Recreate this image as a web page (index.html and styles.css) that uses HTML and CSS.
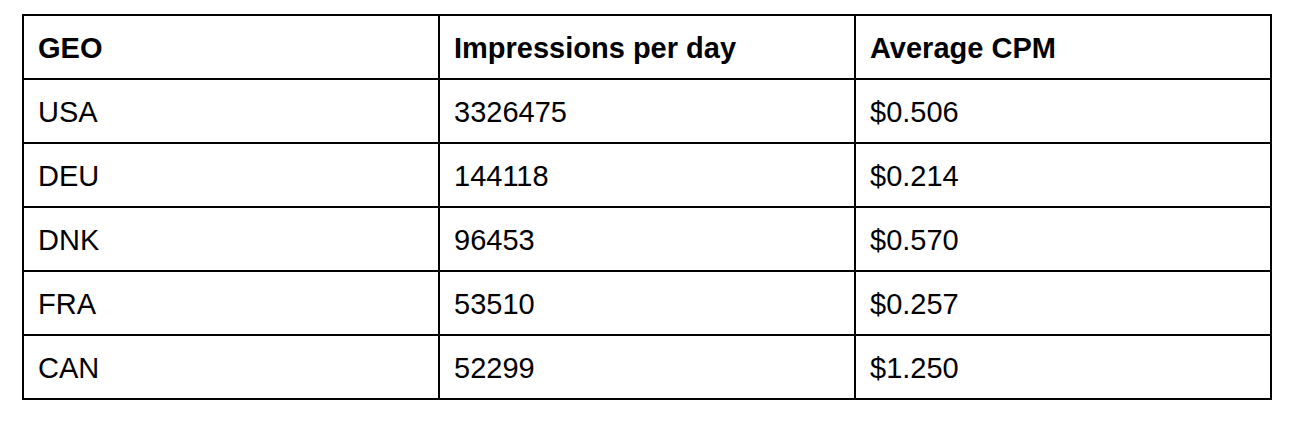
FILE: index.html
```html
<!DOCTYPE html>
<html>
<head>
<meta charset="utf-8">
<link rel="stylesheet" href="styles.css">
</head>
<body>
<table class="geo-table">
  <colgroup><col class="c"><col class="c"><col class="c"></colgroup>
  <thead>
    <tr><th>GEO</th><th>Impressions per day</th><th>Average CPM</th></tr>
  </thead>
  <tbody>
    <tr><td>USA</td><td>3326475</td><td>$0.506</td></tr>
    <tr><td>DEU</td><td>144118</td><td>$0.214</td></tr>
    <tr><td>DNK</td><td>96453</td><td>$0.570</td></tr>
    <tr><td>FRA</td><td>53510</td><td>$0.257</td></tr>
    <tr><td>CAN</td><td>52299</td><td>$1.250</td></tr>
  </tbody>
</table>
</body>
</html>
```
FILE: styles.css
```css
html, body {
  margin: 0;
  padding: 0;
  background: #fff;
}
body {
  padding: 14px 0 0 22px;
  font-family: "Liberation Sans", Arial, sans-serif;
  color: #000;
}
.geo-table {
  border-collapse: collapse;
  table-layout: fixed;
  width: 1250px;
  font-size: 29px;
}
.geo-table .c {
  width: 33.333%;
}
.geo-table th,
.geo-table td {
  border: 2px solid #000;
  padding: 3px 14px 0;
  height: 64px;
  box-sizing: border-box;
  text-align: left;
  vertical-align: middle;
  line-height: 1;
}
.geo-table th {
  font-weight: bold;
}
.geo-table td {
  font-weight: normal;
}
```
